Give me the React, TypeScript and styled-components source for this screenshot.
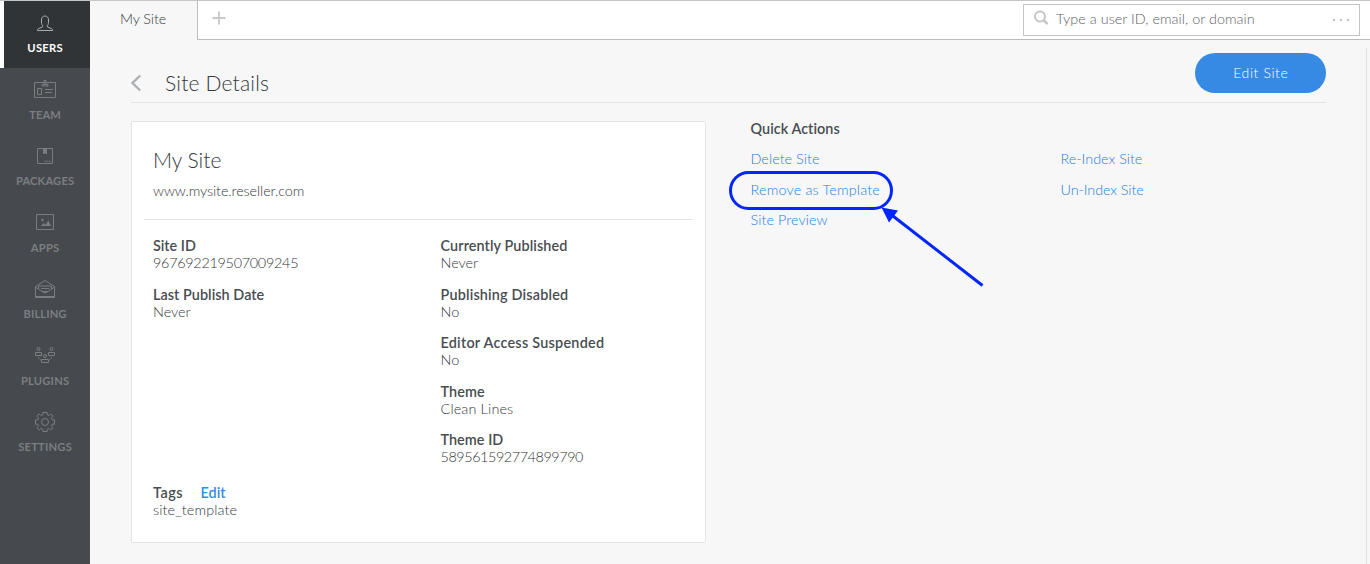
import React from "react";
import styled, { createGlobalStyle } from "styled-components";

const GlobalStyle = createGlobalStyle`
  * { box-sizing: border-box; }
  body {
    margin: 0;
    background: #f7f7f7;
    color: #33383c;
    font-family: Lato, "Open Sans", sans-serif;
    font-size: 14.4px;
    font-weight: 300;
    overflow: hidden;
  }
`;

const Page = styled.div`
  display: flex;
  height: 564px;
  border-top: 1px solid #c6c6c6;
`;

const Sidebar = styled.nav`
  width: 90px;
  flex: none;
  display: flex;
  flex-direction: column;
  background: #46494d;
`;

const NavItem = styled.a<{ $active?: boolean }>`
  height: ${(p) => (p.$active ? 67 : 66.5)}px;
  flex: none;
  display: flex;
  flex-direction: column;
  align-items: center;
  padding-top: ${(p) => (p.$active ? 10 : 9)}px;
  padding-right: ${(p) => (p.$active ? 4 : 0)}px;
  border-left: ${(p) => (p.$active ? "4px solid #fff" : "0")};
  background: ${(p) => (p.$active ? "#303437" : "transparent")};
  color: ${(p) => (p.$active ? "#ffffff" : "#7b7e81")};
  font-size: 11.2px;
  font-weight: 700;
  line-height: 14px;

  svg {
    display: block;
    width: 24px;
    height: 24px;
    margin-bottom: ${(p) => (p.$active ? 6 : 6.8)}px;
    color: ${(p) => (p.$active ? "#a9abad" : "#7b7e81")};
  }
`;

const Track = styled.span<{ $by: number }>`
  letter-spacing: ${(p) => p.$by}px;
  margin-right: ${(p) => -p.$by}px;
  white-space: nowrap;
`;

const Main = styled.main`
  flex: 1;
  min-width: 0;
  display: flex;
  flex-direction: column;
`;

const TopBar = styled.header`
  display: flex;
  height: 39px;
  flex: none;
`;

const Tab = styled.div`
  width: 107px;
  padding: 8px 0 0 30px;
  line-height: 20px;
`;

const TabRest = styled.div`
  flex: 1;
  display: flex;
  justify-content: space-between;
  padding: 3px 10px 0 14px;
  background: #fff;
  border-left: 1px solid #b9bbbd;
  border-bottom: 1px solid #b9bbbd;
`;

const PlusIcon = styled.svg`
  width: 14px;
  height: 14px;
  margin-top: 7px;
  color: #c6c8ca;
`;

const Search = styled.div`
  display: flex;
  width: 337px;
  height: 32px;
  border: 1px solid #c2c4c5;
  padding: 0 9px 0 9px;
  color: #5f6366;
  line-height: 28px;

  svg { flex: none; color: #c6c6c6; }
  span { flex: 1; margin-left: 7px; }
`;

const Content = styled.div`
  display: flex;
  flex-direction: column;
  flex: 1;
  margin: 8px 3px 0 0;
  padding: 0 40px 0 41px;
  border-right: 1px solid #e2e2e2;
`;

const TitleRow = styled.div`
  display: flex;
  height: 55px;
  padding-top: 5px;
  border-bottom: 1px solid #e2e3e3;
`;

const BackIcon = styled.svg`
  width: 11px;
  height: 18px;
  margin-top: 21px;
  color: #adb0b2;
`;

const PageTitle = styled.h1`
  flex: 1;
  margin: 17px 0 0 23px;
  font-size: 21px;
  font-weight: 300;
  line-height: 26px;
`;

const EditButton = styled.button`
  width: 131px;
  height: 40px;
  border: 0;
  padding: 0 0 2px;
  border-radius: 20px;
  background: #378ae3;
  color: #fff;
  font: 300 14px Lato, sans-serif;
`;

const Columns = styled.div`
  display: flex;
  margin-top: 18px;
`;

const Card = styled.section`
  width: 575px;
  height: 422px;
  flex: none;
  padding: 24px 13px 0 12px;
  background: #fff;
  border: 1px solid #e3e4e4;
  border-radius: 2px;
`;

const CardHead = styled.div`
  height: 74px;
  padding-left: 9px;
  border-bottom: 1px solid #e2e3e3;
`;

const SiteName = styled.h2`
  margin: 0;
  font-size: 21px;
  font-weight: 300;
  line-height: 28px;
`;

const SiteUrl = styled.div`
  margin-top: 8px;
  line-height: 18px;
`;

const Details = styled.div`
  display: grid;
  grid-template-columns: 287.5px 1fr;
  height: 264px;
  padding: 17px 0 0 9px;
`;

const Field = styled.div`
  height: 48.55px;
  line-height: 17px;
`;

const Label = styled.div`
  display: flex;
  gap: 18px;
  margin-bottom: -1px;
  color: #484d51;
  font-weight: 600;
  line-height: 18px;
`;

const TagsField = styled(Field)`
  padding-left: 9px;
`;

const EditLink = styled.a`
  color: #378ae3;
`;

const Actions = styled.section`
  flex: 1;
  padding-left: 44.5px;
`;

const ActionsTitle = styled.h3`
  margin: -1px 0 12px;
  color: #484d51;
  font-size: 14.4px;
  font-weight: 600;
  line-height: 18px;
`;

const ActionGrid = styled.div`
  display: grid;
  grid-template-columns: 310px 1fr;
  grid-auto-rows: 30.6px;
`;

const ActionLink = styled.a`
  position: relative;
  justify-self: start;
  color: #1f80e0;
  line-height: 17px;
`;

const Highlight = styled.div`
  position: absolute;
  left: -22px;
  top: -10px;
  width: 164px;
  height: 39px;
  border: 3px solid #0226fb;
  border-radius: 20px;
`;

const Arrow = styled.svg`
  position: absolute;
  left: 130px;
  top: 26px;
  width: 106px;
  height: 84px;
`;

const stroke = { fill: "none", stroke: "currentColor", strokeWidth: 1 };

const UserIcon = () => (
  <svg viewBox="0 0 24 24" {...stroke}>
    <path d="M9.7 14.6C8.5 13.5 8.5 12 8.5 9c0-2.5 1.3-4 3.5-4s3.500 1.500 3.500 4c0 3 0 4.500-1.200 5.600v1.300l4.500 1.900c.7.4.9.8.9 1.700H4.300c0-.9.2-1.300.9-1.700l4.500-1.900z" />
  </svg>
);
const TeamIcon = () => (
  <svg viewBox="0 0 24 24" {...stroke}>
    <path d="M1.500 5.500h21v15h-21z" />
    <path d="M11 3.500h2v4h-2zM9 7.500h6v1.500H9zM4.500 11.500h4v6h-4zM12 12.500h8M12 15.500h7" />
  </svg>
);
const PackageIcon = () => (
  <svg viewBox="0 0 24 24" {...stroke}>
    <path d="M4.500 4.500h15v15h-15z" />
    <path d="M10 5h4v5h-1l-1-.7-1 .7h-1z" fill="currentColor" stroke="none" />
    <path d="M11.500 17.200h6" strokeDasharray="2 .5 1 .5" />
  </svg>
);
const AppsIcon = () => (
  <svg viewBox="0 0 24 24" {...stroke}>
    <path d="M3.500 4.500h17v15h-17z" />
    <path d="M8 16l2.500-3 2 2 2.700-4.500L18 16z" fill="currentColor" stroke="none" />
    <circle cx="9.500" cy="10" r="1.200" fill="currentColor" stroke="none" />
  </svg>
);
const BillingIcon = () => (
  <svg viewBox="0 0 24 24" {...stroke}>
    <path d="M2.500 9.500L12 3.500l9.500 6v11h-19zM2.500 10L9 14.500h6l6.500-4.500M5.500 12V9h13v3M8 11.500h8M3 19.500h18" />
    <path d="M9 14.500l3 1.500 3-1.500" />
  </svg>
);
const PluginsIcon = () => (
  <svg viewBox="0 0 24 24" {...stroke}>
    <circle cx="5.500" cy="6" r="1.500" />
    <circle cx="18.500" cy="6" r="1.500" />
    <circle cx="12" cy="13" r="1.500" />
    <path d="M2.500 9.500h6v3h-6zM15.500 9.500h6v3h-6zM8.500 16.500h7v3h-7z" />
    <path d="M5 14l3 3.500M19 14l-3 3.500" strokeDasharray="2 1" />
  </svg>
);
const SettingsIcon = () => (
  <svg viewBox="0 0 24 24" {...stroke}>
    <circle cx="12" cy="12" r="3.500" />
    <path d="M9.800 2.500h4.400v2.200l2 .8 1.600-1.600 2.300 2.300-1.600 1.600.8 2h2.200v4.400h-2.200l-.8 2 1.600 1.600-2.300 2.300-1.600-1.600-2 .8v2.200H9.800v-2.200l-2-.8-1.600 1.600-2.300-2.300 1.600-1.600-.8-2H2.500V9.800h2.200l.8-2-1.600-1.600 2.300-2.300 1.600 1.600 2-.8z" />
  </svg>
);

const navItems = [
  { name: "USERS", icon: UserIcon, track: 0.3 },
  { name: "TEAM", icon: TeamIcon, track: 0 },
  { name: "PACKAGES", icon: PackageIcon, track: 0.15 },
  { name: "APPS", icon: AppsIcon, track: 0.2 },
  { name: "BILLING", icon: BillingIcon, track: 0.1 },
  { name: "PLUGINS", icon: PluginsIcon, track: 0.2 },
  { name: "SETTINGS", icon: SettingsIcon, track: 0.2 },
];

type FieldData = { label: string; value: string; lt: number; vt: number };

const leftFields: FieldData[] = [
  { label: "Site ID", value: "967692219507009245", lt: 0, vt: -0.28 },
  { label: "Last Publish Date", value: "Never", lt: 0.05, vt: 0 },
];
const rightFields: FieldData[] = [
  { label: "Currently Published", value: "Never", lt: 0.1, vt: 0 },
  { label: "Publishing Disabled", value: "No", lt: 0.18, vt: 0 },
  { label: "Editor Access Suspended", value: "No", lt: 0.25, vt: 0 },
  { label: "Theme", value: "Clean Lines", lt: 0.1, vt: 0.15 },
  { label: "Theme ID", value: "589561592774899790", lt: 0.05, vt: -0.43 },
];

const FieldList = ({ items }: { items: FieldData[] }) => (
  <div>
    {items.map((f) => (
      <Field key={f.label}>
        <Label><Track $by={f.lt}>{f.label}</Track></Label>
        <Track $by={f.vt}>{f.value}</Track>
      </Field>
    ))}
  </div>
);

export default function App() {
  return (
    <>
      <GlobalStyle />
      <Page>
        <Sidebar>
          {navItems.map(({ name, icon: Icon, track }, i) => (
            <NavItem key={name} $active={i === 0}>
              <Icon />
              <Track $by={track}>{name}</Track>
            </NavItem>
          ))}
        </Sidebar>
        <Main>
          <TopBar>
            <Tab><Track $by={-0.1}>My Site</Track></Tab>
            <TabRest>
              <PlusIcon viewBox="0 0 14 14" stroke="currentColor" strokeWidth="1.800">
                <path d="M7 .5v13M.5 7h13" />
              </PlusIcon>
              <Search>
                <svg width="16" height="28" viewBox="0 0 16 28" fill="none" stroke="currentColor">
                  <circle cx="7" cy="11.500" r="5" strokeWidth="2" />
                  <path d="M10.600 15.200l4 4" strokeWidth="2.600" />
                </svg>
                <Track $by={0.03}>Type a user ID, email, or domain</Track>
                <svg width="18" height="30" viewBox="0 0 18 30" fill="currentColor">
                  <circle cx="2" cy="15" r="1.300" />
                  <circle cx="9" cy="15" r="1.300" />
                  <circle cx="16" cy="15" r="1.300" />
                </svg>
              </Search>
            </TabRest>
          </TopBar>
          <Content>
            <TitleRow>
              <BackIcon viewBox="0 0 11 18" fill="none" stroke="currentColor" strokeWidth="2.400">
                <path d="M9.200 1.500L1.500 9l7.700 7.500" />
              </BackIcon>
              <PageTitle><Track $by={0.19}>Site Details</Track></PageTitle>
              <EditButton><Track $by={0.6}>Edit Site</Track></EditButton>
            </TitleRow>
            <Columns>
              <Card>
                <CardHead>
                  <SiteName><Track $by={0}>My Site</Track></SiteName>
                  <SiteUrl><Track $by={-0.1}>www.mysite.reseller.com</Track></SiteUrl>
                </CardHead>
                <Details>
                  <FieldList items={leftFields} />
                  <FieldList items={rightFields} />
                </Details>
                <TagsField>
                  <Label>
                    <Track $by={0.5}>Tags</Track>
                    <EditLink><Track $by={0}>Edit</Track></EditLink>
                  </Label>
                  <Track $by={0.12}>site_template</Track>
                </TagsField>
              </Card>
              <Actions>
                <ActionsTitle><Track $by={0.05}>Quick Actions</Track></ActionsTitle>
                <ActionGrid>
                  <ActionLink><Track $by={0.04}>Delete Site</Track></ActionLink>
                  <ActionLink><Track $by={0}>Re-Index Site</Track></ActionLink>
                  <ActionLink>
                    <Track $by={0.18}>Remove as Template</Track>
                    <Highlight />
                    <Arrow viewBox="0 0 106 84">
                      <path d="M10 7.500L101.500 78.500" stroke="#0226fb" strokeWidth="3" />
                      <path d="M.5 .5l16.500 3L8 15.500z" fill="#0226fb" />
                    </Arrow>
                  </ActionLink>
                  <ActionLink><Track $by={-0.08}>Un-Index Site</Track></ActionLink>
                  <ActionLink><Track $by={0.08}>Site Preview</Track></ActionLink>
                </ActionGrid>
              </Actions>
            </Columns>
          </Content>
        </Main>
      </Page>
    </>
  );
}
